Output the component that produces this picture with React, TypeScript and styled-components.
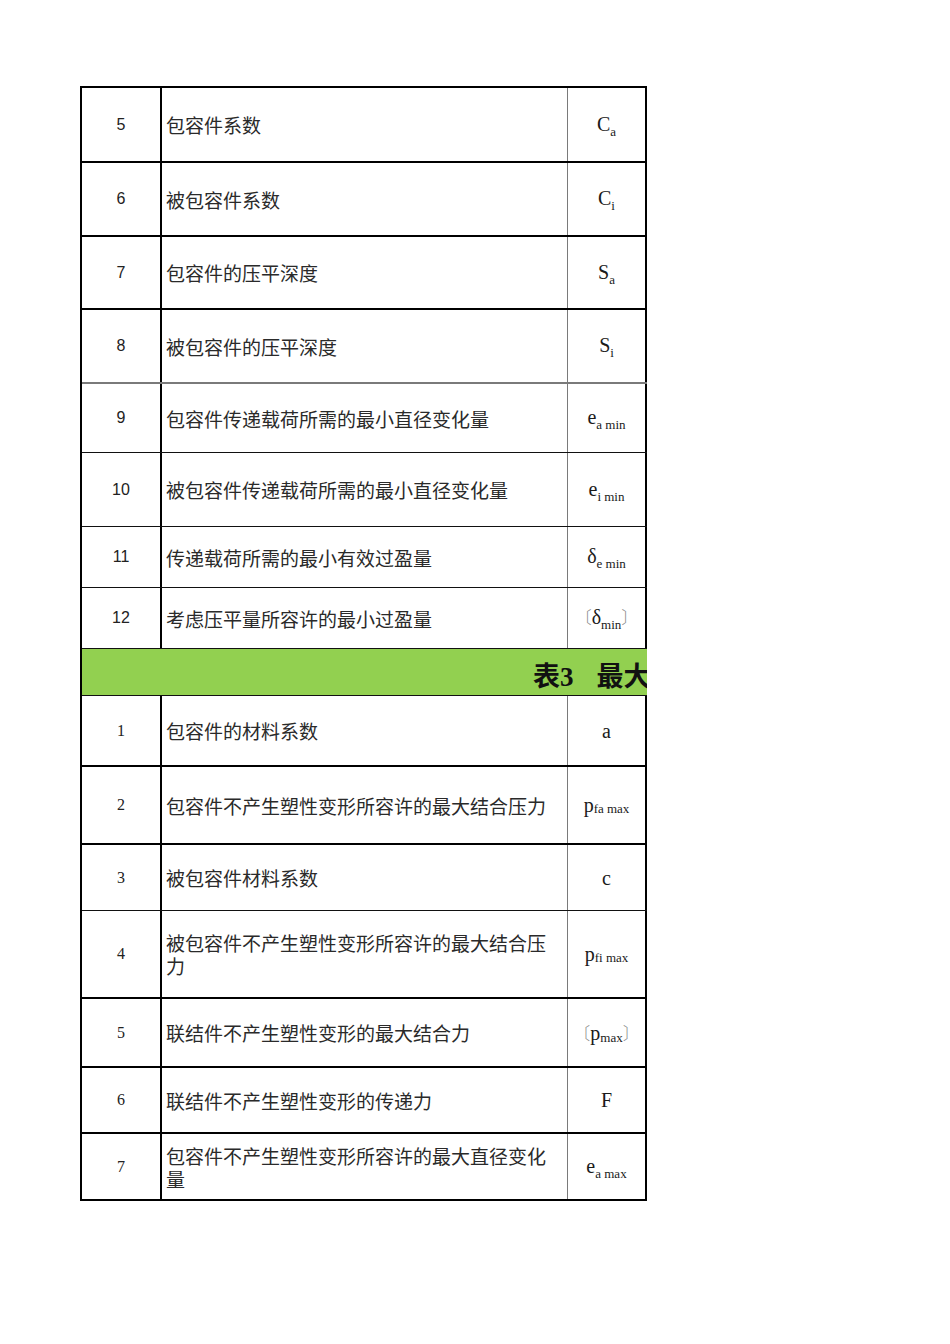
import React from "react";
import styled, { createGlobalStyle } from "styled-components";

const Global = createGlobalStyle`
  html, body { margin: 0; padding: 0; background: #fff; }
  body { font-family: "Noto Sans CJK SC", sans-serif; }
`;

const Page = styled.div`
  width: 950px;
  height: 1344px;
  padding: 86px 0 0 80px;
  box-sizing: border-box;
  background: #fff;
`;

const Clip = styled.div`
  width: 567px;
  overflow: hidden;
`;

const Table = styled.div`
  width: 900px;
  border-top: 2px solid #000;
  border-left: 2px solid #000;
  display: flex;
  flex-direction: column;
`;

type Line = "thick" | "thin" | "grey";

const lineCss = (l: Line) =>
  l === "thick" ? "2px solid #000" : l === "grey" ? "2px solid #7a7a7a" : "1px solid #111";

const Row = styled.div<{ $h: number; $line: Line }>`
  display: grid;
  grid-template-columns: 80px 406px 79px 1fr;
  height: ${(p) => p.$h}px;
  box-sizing: border-box;
  border-bottom: ${(p) => lineCss(p.$line)};
`;

const NumCell = styled.div<{ $serif?: boolean }>`
  display: flex;
  align-items: center;
  justify-content: center;
  border-right: 2px solid #000;
  font-family: ${(p) => (p.$serif ? '"Liberation Serif", serif' : '"Liberation Sans", sans-serif')};
  font-size: 16px;
  color: #222;
`;

const NameCell = styled.div`
  display: flex;
  align-items: center;
  padding: 0 16px 0 4px;
  border-right: 1px solid #7a7a7a;
  font-family: "Noto Sans CJK SC", sans-serif;
  font-size: 19px;
  line-height: 23px;
  color: #2a2a2a;
  word-break: break-all;
`;

const SymCell = styled.div`
  display: flex;
  align-items: center;
  justify-content: center;
  border-right: 2px solid #000;
  font-family: "Liberation Serif", serif;
  font-size: 20px;
  line-height: 24px;
  color: #1a1a1a;
  white-space: nowrap;
`;

const Sym = styled.span`
  display: inline-block;
  line-height: 24px;
`;

const Sub = styled.span<{ $shift?: number }>`
  font-size: 13px;
  display: inline-block;
  line-height: 13px;
  vertical-align: ${(p) => (p.$shift !== undefined ? p.$shift : -5)}px;
`;

const Bracket = styled.span`
  font-family: "Noto Sans CJK SC", sans-serif;
  font-size: 17px;
  color: #8a8a8a;
  font-weight: 300;
`;

const HeaderRow = styled.div`
  height: 47px;
  box-sizing: border-box;
  border-bottom: 1px solid #111;
  background: #92d050;
  display: flex;
  align-items: flex-end;
  padding: 0 0 1px 451px;
`;

const HeaderTitle = styled.div`
  font-family: "Liberation Serif", "Noto Sans CJK SC", serif;
  font-weight: 700;
  font-size: 27px;
  line-height: 34px;
  color: #111;
  white-space: nowrap;
  display: flex;
`;

const TitleRest = styled.span`
  margin-left: 23px;
`;

type Item = { n: string; name: string; sym: React.ReactNode; h: number; line: Line };

const top: Item[] = [
  { n: "5", name: "包容件系数", sym: <>C<Sub>a</Sub></>, h: 75, line: "thick" },
  { n: "6", name: "被包容件系数", sym: <>C<Sub>i</Sub></>, h: 74, line: "thick" },
  { n: "7", name: "包容件的压平深度", sym: <>S<Sub>a</Sub></>, h: 73, line: "thick" },
  { n: "8", name: "被包容件的压平深度", sym: <>S<Sub>i</Sub></>, h: 74, line: "grey" },
  { n: "9", name: "包容件传递载荷所需的最小直径变化量", sym: <>e<Sub>a min</Sub></>, h: 69, line: "thin" },
  { n: "10", name: "被包容件传递载荷所需的最小直径变化量", sym: <>e<Sub>i min</Sub></>, h: 74, line: "thin" },
  { n: "11", name: "传递载荷所需的最小有效过盈量", sym: <>δ<Sub>e min</Sub></>, h: 61, line: "thin" },
  {
    n: "12",
    name: "考虑压平量所容许的最小过盈量",
    sym: <><Bracket>〔</Bracket>δ<Sub $shift={-5}>min</Sub><Bracket>〕</Bracket></>,
    h: 61,
    line: "thin",
  },
];

const bottom: Item[] = [
  { n: "1", name: "包容件的材料系数", sym: <>a</>, h: 71, line: "thick" },
  { n: "2", name: "包容件不产生塑性变形所容许的最大结合压力", sym: <>p<Sub $shift={-1}>fa max</Sub></>, h: 78, line: "thick" },
  { n: "3", name: "被包容件材料系数", sym: <>c</>, h: 66, line: "thin" },
  { n: "4", name: "被包容件不产生塑性变形所容许的最大结合压力", sym: <>p<Sub $shift={-1}>fi max</Sub></>, h: 88, line: "thick" },
  {
    n: "5",
    name: "联结件不产生塑性变形的最大结合力",
    sym: <><Bracket>〔</Bracket>p<Sub $shift={-2}>max</Sub><Bracket>〕</Bracket></>,
    h: 69,
    line: "thick",
  },
  { n: "6", name: "联结件不产生塑性变形的传递力", sym: <>F</>, h: 66, line: "thick" },
  { n: "7", name: "包容件不产生塑性变形所容许的最大直径变化量", sym: <>e<Sub>a max</Sub></>, h: 67, line: "thick" },
];

const renderRows = (items: Item[], serif: boolean) =>
  items.map((it, i) => (
    <Row key={i} $h={it.h} $line={it.line}>
      <NumCell $serif={serif}>{it.n}</NumCell>
      <NameCell>{it.name}</NameCell>
      <SymCell>
        <Sym>{it.sym}</Sym>
      </SymCell>
      <div />
    </Row>
  ));

export default function App() {
  return (
    <>
      <Global />
      <Page>
        <Clip>
          <Table>
            {renderRows(top, false)}
            <HeaderRow>
              <HeaderTitle>
                表3<TitleRest>最大</TitleRest>
              </HeaderTitle>
            </HeaderRow>
            {renderRows(bottom, true)}
          </Table>
        </Clip>
      </Page>
    </>
  );
}
